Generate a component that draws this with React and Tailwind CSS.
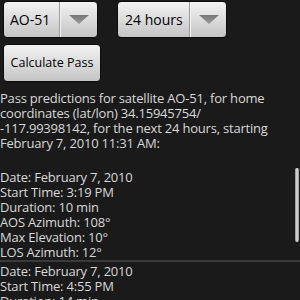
import React from "react";

function Arrow() {
  return (
    <svg width="20" height="9" viewBox="0 0 20 9">
      <defs>
        <linearGradient id="ag" x1="0" y1="0" x2="0" y2="1">
          <stop offset="0" stopColor="#767676" />
          <stop offset="1" stopColor="#9c9c9c" />
        </linearGradient>
      </defs>
      <polygon points="0,0 20,0 10,9" fill="url(#ag)" />
    </svg>
  );
}

function Spinner({ label, w, divAt, pad }) {
  return (
    <div
      className="flex h-[37px] rounded-[4px] border border-[#0a0a0a] bg-gradient-to-b from-[#f2f2f2] via-[#dcdcdc] to-[#c4c4c4] text-black text-[14px] leading-none whitespace-nowrap"
      style={{ width: w }}
    >
      <div className="flex items-center" style={{ width: divAt, paddingLeft: pad }}>
        {label}
      </div>
      <div className="w-[1px] bg-[#9c9c9c]" />
      <div className="w-[1px] bg-[#f4f4f4]" />
      <div className="flex flex-1 items-center justify-center">
        <Arrow />
      </div>
    </div>
  );
}

export default function App() {
  const lines1 = [
    "Date: February 7, 2010",
    "Start Time: 3:19 PM",
    "Duration: 10 min",
    "AOS Azimuth: 108°",
    "Max Elevation: 10°",
    "LOS Azimuth: 12°",
  ];
  const lines2 = [
    "Date: February 7, 2010",
    "Start Time: 4:55 PM",
    "Duration: 14 min",
  ];
  return (
    <div className="relative w-[300px] h-[300px] overflow-hidden bg-[#1a1a1a] font-['Open_Sans','Noto_Sans',sans-serif] text-[#d8d8d8]">
      <div className="flex pt-[1px] pl-[3px] gap-[19px]">
        <Spinner label="AO-51" w={95} divAt={55} pad={6} />
        <Spinner label="24 hours" w={110} divAt={71} pad={7} />
      </div>
      <div className="pl-[3px] pt-[6px]">
        <div className="flex h-[38px] w-[98px] items-center justify-center rounded-[4px] border border-[#0a0a0a] bg-gradient-to-b from-[#f2f2f2] via-[#dcdcdc] to-[#c4c4c4] text-black text-[12.5px] leading-none whitespace-nowrap">
          Calculate Pass
        </div>
      </div>
      <div className="pt-[9px] text-[13px] leading-[15px] tracking-[-0.2px] whitespace-nowrap">
        <div>Pass predictions for satellite AO-51, for home</div>
        <div>coordinates (lat/lon) 34.15945754/</div>
        <div>-117.99398142, for the next 24 hours, starting</div>
        <div>February 7, 2010 11:31 AM:</div>
      </div>
      <div className="relative mt-[17px]">
        <div className="text-[13px] leading-[15px] tracking-[-0.2px] whitespace-nowrap">
          <div className="pt-[2px]">
            {lines1.map((l) => (
              <div key={l}>{l}</div>
            ))}
          </div>
          <div className="h-[2px] bg-[#3a3a3a]" />
          <div className="pt-[2px]">
            {lines2.map((l) => (
              <div key={l}>{l}</div>
            ))}
          </div>
        </div>
        <div className="absolute right-[1px] top-[-1px] h-[75px] w-[4px] rounded-[2px] border-t border-[#111] bg-gradient-to-r from-[#8a8a8a] via-[#e4e4e4] to-[#8a8a8a]" />
      </div>
    </div>
  );
}
